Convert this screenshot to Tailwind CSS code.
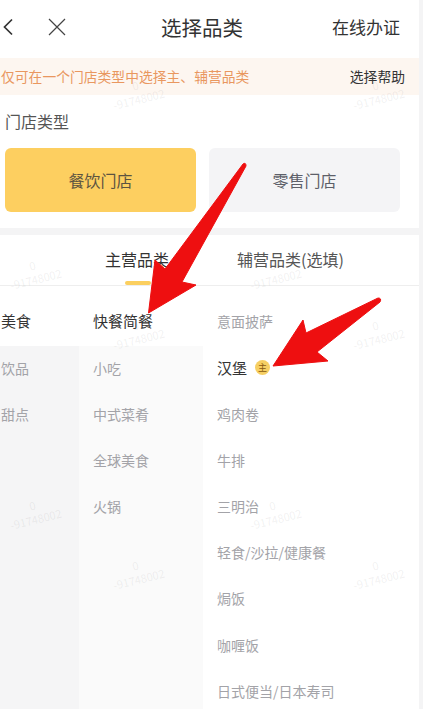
<!DOCTYPE html>
<html lang="zh">
<head>
<meta charset="utf-8">
<script src="https://cdn.jsdelivr.net/npm/@tailwindcss/browser@4"></script>
</head>
<body class="bg-[#f4f4f5]">
<div class="relative w-[423px] h-[709px] overflow-hidden bg-[#f4f4f5] font-['Noto_Sans_CJK_SC','Noto_Sans',sans-serif] text-[#333]">
  <div class="w-[419px]">
    <header class="relative flex items-center h-[58px] bg-white pl-[2px] pr-[19px] pb-[4px]">
      <svg class="w-[12px] h-[18px]" viewBox="0 0 12 18" fill="none" stroke="#333" stroke-width="1.700"><path d="M10 1.500 L2.500 9 L10 16.500"/></svg>
      <svg class="ml-[33px] w-[20px] h-[20px]" viewBox="0 0 20 20" fill="none" stroke="#444" stroke-width="1.200"><path d="M2 2 L18 18 M18 2 L2 18"/></svg>
      <h1 class="ml-[94px] text-[20.500px] leading-[28px] font-normal">选择品类</h1>
      <span class="ml-auto text-[17px] leading-[24px]">在线办证</span>
    </header>
    <div class="flex items-center justify-between h-[37px] bg-[#fdf6f0] pl-[1px] pr-[14px] text-[13.800px]">
      <span class="text-[#e9975f]">仅可在一个门店类型中选择主、辅营品类</span>
      <span class="text-[#333]">选择帮助</span>
    </div>
    <section class="h-[133px] bg-white pl-[5px] pr-[19px] pt-[15px]">
      <h2 class="text-[16px] leading-[22px] font-normal text-[#555]">门店类型</h2>
      <div class="grid grid-cols-2 gap-[13px] mt-[16px]">
        <button class="h-[64px] rounded-[6px] bg-[#fdcf60] text-[16px] text-[#5c5340]">餐饮门店</button>
        <button class="h-[64px] rounded-[6px] bg-[#f4f4f6] text-[16px] text-[#5d5f69]">零售门店</button>
      </div>
    </section>
    <nav class="relative flex h-[51px] mt-[7px] bg-white border-b border-[#eeeeee] text-[16px]">
      <div class="relative ml-[105px] pt-[13px] leading-[22px] text-[#333]">主营品类
        <span class="absolute left-[20px] top-[46px] w-[26px] h-[4px] rounded-[2px] bg-[#fbcf5f]"></span>
      </div>
      <div class="ml-[68px] pt-[13px] leading-[22px] text-[#555]">辅营品类(选填)</div>
    </nav>
    <div class="flex h-[424px] bg-white text-[14px] leading-[20px] text-[#a3a3a8]">
      <ul class="w-[79px] bg-[#f5f5f6] pl-[1px]">
        <li class="-ml-[1px] pl-[1px] h-[60px] pt-[25px] bg-white text-[15px] text-[#333]">美食</li>
        <li class="h-[46.200px] pt-[11.500px]">饮品</li>
        <li class="h-[46.200px] pt-[11.500px]">甜点</li>
      </ul>
      <ul class="w-[124px] bg-[#fafafa] pl-[14px]">
        <li class="-ml-[14px] pl-[14px] h-[60px] pt-[25px] bg-white text-[15px] text-[#333]">快餐简餐</li>
        <li class="h-[46.200px] pt-[11.500px]">小吃</li>
        <li class="h-[46.200px] pt-[11.500px]">中式菜肴</li>
        <li class="h-[46.200px] pt-[11.500px]">全球美食</li>
        <li class="h-[46.200px] pt-[11.500px]">火锅</li>
      </ul>
      <ul class="flex-1 pl-[14px]">
        <li class="h-[60px] pt-[25px]">意面披萨</li>
        <li class="flex items-start h-[46.200px] pt-[11.500px] text-[15px] text-[#333]">汉堡<span class="ml-[8px] mt-[2px] flex items-center justify-center w-[15px] h-[15px] rounded-full bg-[#f6cf63] text-[9px] leading-none text-[#8a5a10]">主</span></li>
        <li class="h-[46.200px] pt-[11.500px]">鸡肉卷</li>
        <li class="h-[46.200px] pt-[11.500px]">牛排</li>
        <li class="h-[46.200px] pt-[11.500px]">三明治</li>
        <li class="h-[46.200px] pt-[11.500px]">轻食/沙拉/健康餐</li>
        <li class="h-[46.200px] pt-[11.500px]">焗饭</li>
        <li class="h-[46.200px] pt-[11.500px]">咖喱饭</li>
        <li class="h-[46.200px] pt-[11.500px]">日式便当/日本寿司</li>
      </ul>
    </div>
  </div>

  <!-- watermark overlay -->
  <div class="absolute inset-0 pointer-events-none text-[11px] leading-[14px] text-center text-[#8a8a8a]/12">
    <div class="absolute left-[105px] top-[78px] w-[64px] -rotate-[14deg]">0<br>-91748002</div>
    <div class="absolute left-[345px] top-[78px] w-[64px] -rotate-[14deg]">0<br>-91748002</div>
    <div class="absolute left-[2px] top-[258px] w-[64px] -rotate-[14deg]">0<br>-91748002</div>
    <div class="absolute left-[242px] top-[258px] w-[64px] -rotate-[14deg]">0<br>-91748002</div>
    <div class="absolute left-[105px] top-[318px] w-[64px] -rotate-[14deg]">0<br>-91748002</div>
    <div class="absolute left-[345px] top-[318px] w-[64px] -rotate-[14deg]">0<br>-91748002</div>
    <div class="absolute left-[2px] top-[498px] w-[64px] -rotate-[14deg]">0<br>-91748002</div>
    <div class="absolute left-[242px] top-[498px] w-[64px] -rotate-[14deg]">0<br>-91748002</div>
    <div class="absolute left-[105px] top-[558px] w-[64px] -rotate-[14deg]">0<br>-91748002</div>
    <div class="absolute left-[345px] top-[558px] w-[64px] -rotate-[14deg]">0<br>-91748002</div>
  </div>

  <!-- red annotation arrows -->
  <svg class="absolute inset-0 pointer-events-none" width="423" height="709" viewBox="0 0 423 709">
    <path fill="#ee0f10" stroke="#ee0f10" stroke-width="1" stroke-linejoin="round" d="M148.500 313 L155 260 L165 269 L243 164 Q246 162 246 166 L182 282 L196 285 Z"/>
    <path fill="#ee0f10" stroke="#ee0f10" stroke-width="1" stroke-linejoin="round" d="M273 366 L303 320 L306 333 L378 298 Q382 298 380 302 L317 352 L328 361 Z"/>
  </svg>
</div>
</body>
</html>
